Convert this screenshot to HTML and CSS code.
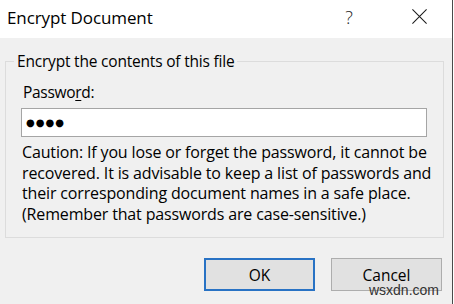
FILE: index.html
```html
<!DOCTYPE html>
<html>
<head>
<meta charset="utf-8">
<link rel="stylesheet" href="styles.css">
</head>
<body>
<div class="window">
  <div class="titlebar">
    <span class="title">Encrypt Document</span>
    <div class="controls">
      <span class="help">?</span>
      <svg class="close" width="18" height="18" viewBox="0 0 18 18"><path d="M1.5 1.5 L16.5 16.5 M16.5 1.5 L1.5 16.5" stroke="#1a1a1a" stroke-width="1.1" fill="none"/></svg>
    </div>
  </div>
  <div class="content">
    <fieldset class="group">
      <legend class="legend">Encrypt the contents of this file</legend>
      <div class="label">Passwo<u>r</u>d:</div>
      <div class="input"><span class="dots">●●●●</span></div>
      <p class="caution">Caution: If you lose or forget the password, it cannot be<br>recovered. It is advisable to keep a list of passwords and<br>their corresponding document names in a safe place.<br>(Remember that passwords are case-sensitive.)</p>
    </fieldset>
    <div class="buttons">
      <div class="btn btn-default">OK</div>
      <div class="btn">Cancel</div>
    </div>
    <span class="watermark">wsxdn.com</span>
  </div>
</div>
</body>
</html>
```
FILE: styles.css
```css
html, body {
  margin: 0;
  padding: 0;
}
body {
  width: 454px;
  height: 304px;
  background: #ffffff;
  font-family: "Open Sans", "Noto Sans", sans-serif;
  color: #000;
  overflow: hidden;
}
.window {
  width: 452px;
  height: 304px;
  border-right: 1px solid #4a4a4a;
  display: flex;
  flex-direction: column;
}
.titlebar {
  height: 38px;
  background: #ffffff;
  display: flex;
  align-items: center;
  justify-content: space-between;
  padding-left: 7px;
  box-sizing: border-box;
}
.title {
  font-size: 17px;
  letter-spacing: -0.1px;
  margin-top: -4px;
}
.controls {
  display: flex;
  align-items: center;
  margin-top: -5px;
}
.help {
  font-size: 18px;
  font-weight: 300;
  color: #222;
  width: 16px;
  text-align: center;
}
.close {
  margin-left: 54px;
  margin-right: 24px;
  width: 17px;
  height: 17px;
}
.content {
  flex: 1;
  background: #f0f0f0;
  position: relative;
  padding: 12px 0 0 5px;
}
.group {
  margin: 0;
  width: 439px;
  height: 188px;
  box-sizing: border-box;
  border: 1px solid #dcdcdc;
  padding: 0 0 0 16px;
}
.legend {
  font-size: 15.5px;
  padding: 0 3px;
  margin-left: -8px;
  letter-spacing: -0.2px;
}
.label {
  font-size: 15.5px;
  letter-spacing: -0.3px;
  margin-top: 10px;
  line-height: 20px;
  margin-left: 1px;
}
u {
  text-decoration-thickness: 1px;
  text-underline-offset: 2px;
}
.input {
  width: 406px;
  height: 29px;
  box-sizing: border-box;
  border: 1px solid #a5a5a5;
  background: #fff;
  margin-top: 6px;
  margin-left: -1px;
  display: flex;
  align-items: center;
  padding-left: 4px;
}
.dots {
  font-size: 10px;
  letter-spacing: 1px;
  font-family: "DejaVu Sans", sans-serif;
}
.caution {
  margin: 5px 0 0 0;
  font-size: 16px;
  line-height: 20.5px;
  letter-spacing: -0.15px;
  white-space: nowrap;
}
.buttons {
  display: flex;
  justify-content: flex-end;
  gap: 16px;
  margin-top: 20px;
  padding-right: 10px;
}
.btn {
  width: 111px;
  height: 33px;
  box-sizing: border-box;
  background: #e1e1e1;
  border: 1px solid #adadad;
  display: flex;
  align-items: center;
  justify-content: center;
  font-size: 15.5px;
}
.btn-default {
  border: 2px solid #2872c4;
}
.watermark {
  position: absolute;
  right: 13px;
  bottom: 6px;
  font-size: 14px;
  color: #333;
  font-family: "Liberation Sans", sans-serif;
}
```
